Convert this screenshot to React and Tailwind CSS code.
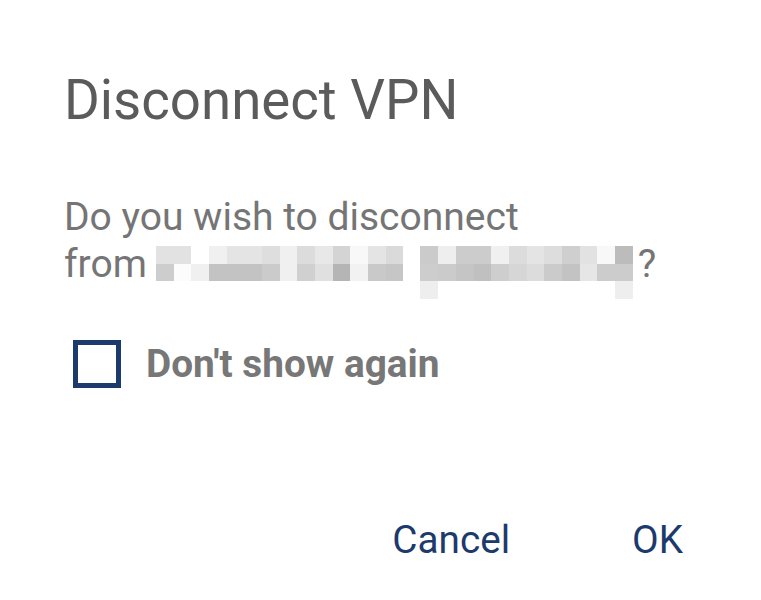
import React from "react";

const g1r1 = ["bg-[#e2e2e2]","bg-[#e2e2e2]","bg-[#ffffff]","bg-[#f0f0f0]","bg-[#e4e4e4]","bg-[#e4e4e4]","bg-[#dedede]","bg-[#f0f0f0]","bg-[#dcdcdc]","bg-[#e8e8e8]","bg-[#d4d4d4]","bg-[#f8f8f8]","bg-[#e4e4e4]","bg-[#dadada]"];
const g1r2 = ["bg-[#cdcdcd]","bg-[#fcfcfc]","bg-[#f0f0f0]","bg-[#c3c3c3]","bg-[#c3c3c3]","bg-[#c3c3c3]","bg-[#cbcbcb]","bg-[#f0f0f0]","bg-[#d0d0d0]","bg-[#e0e0e0]","bg-[#b5b5b5]","bg-[#f2f2f2]","bg-[#c9c9c9]","bg-[#c6c6c6]"];
const g2r1 = ["bg-[#cbcbcb]","bg-[#eeeeee]","bg-[#cccccc]","bg-[#cccccc]","bg-[#f0f0f0]","bg-[#dcdcdc]","bg-[#e4e4e4]","bg-[#dddddd]","bg-[#cfcfcf]","bg-[#e2e2e2]","bg-[#f8f8f8]","bg-[#bcbcbc]"];
const g2r2 = ["bg-[#cdcdcd]","bg-[#cbcbcb]","bg-[#c5c5c5]","bg-[#c0c0c0]","bg-[#cecece]","bg-[#d6d6d6]","bg-[#dcdcdc]","bg-[#cbcbcb]","bg-[#c3c3c3]","bg-[#e6e6e6]","bg-[#cccccc]","bg-[#cccccc]"];
const g2r3 = ["bg-[#eeeeee]","bg-transparent","bg-transparent","bg-transparent","bg-transparent","bg-transparent","bg-transparent","bg-transparent","bg-transparent","bg-transparent","bg-transparent","bg-[#eeeeee]"];

function Row({ cells }) {
  return (
    <div className="flex">
      {cells.map((c, i) => (
        <div key={i} className={`w-[17.7px] h-[17.5px] ${c}`} />
      ))}
    </div>
  );
}

export default function App() {
  return (
    <div className="w-[761px] h-[600px] bg-white flex flex-col font-['Roboto',sans-serif]">
      <div className="pl-[64px] pt-[68px] text-[54.6px] leading-[64px] text-[#5b5b5b]">Disconnect VPN</div>
      <div className="pl-[64px] pt-[62px] text-[39px] leading-[47px] text-[#757575]">
        <div>Do you wish to disconnect</div>
        <div className="flex items-start">
          <span>from</span>
          <div className="ml-[9px] mt-[5px] flex flex-col">
            <Row cells={g1r1} />
            <Row cells={g1r2} />
          </div>
          <div className="ml-[17px] mt-[5px] flex flex-col">
            <Row cells={g2r1} />
            <Row cells={g2r2} />
            <Row cells={g2r3} />
          </div>
          <span className="ml-[5px]">?</span>
        </div>
      </div>
      <div className="pl-[73px] pt-[36px] flex items-center">
        <div className="w-[48px] h-[48px] border-[5px] border-[#1c3a6b]" />
        <span className="ml-[25px] text-[38.8px] font-bold text-[#777777]">Don't show again</span>
      </div>
      <div className="flex justify-end pr-[78px] pt-[118px] text-[38.7px] text-[#1c3a6b] gap-[122px]">
        <span>Cancel</span>
        <span>OK</span>
      </div>
    </div>
  );
}
